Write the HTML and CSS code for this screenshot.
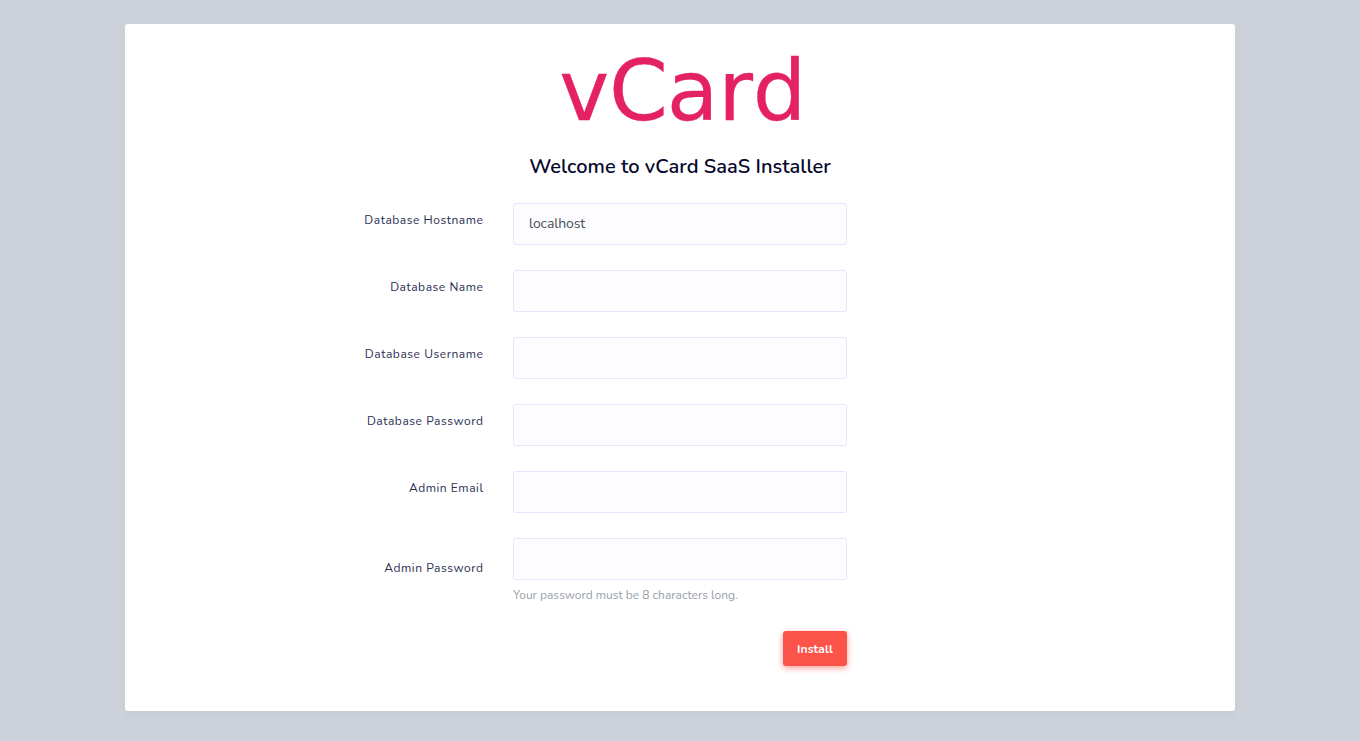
FILE: index.html
```html
<!DOCTYPE html>
<html lang="en">
<head>
<meta charset="utf-8">
<title>vCard SaaS Installer</title>
<link rel="stylesheet" href="styles.css">
</head>
<body>
<main class="card">
  <svg class="logo" viewBox="0 0 250 80" role="img" aria-label="vCard"><text class="logo-text" x="4.2 54 111.8 163.2 197.7" y="72.2">vCard</text></svg>
  <h1 class="title"><span>Welcome to vCard SaaS Installer</span></h1>
  <form class="form">
    <div class="row"><label class="label" for="host">Database Hostname</label><input class="input" id="host" type="text" value="localhost"></div>
    <div class="row"><label class="label" for="name">Database Name</label><input class="input" id="name" type="text"></div>
    <div class="row"><label class="label" for="user">Database Username</label><input class="input" id="user" type="text"></div>
    <div class="row"><label class="label" for="pass">Database Password</label><input class="input" id="pass" type="password"></div>
    <div class="row"><label class="label" for="email">Admin Email</label><input class="input" id="email" type="email"></div>
    <div class="row row-last"><label class="label" for="adminpass">Admin Password</label><div class="field"><input class="input" id="adminpass" type="password"><small class="hint">Your password must be 8 characters long.</small></div></div>
    <div class="actions"><button class="button" type="button">Install</button></div>
  </form>
</main>
</body>
</html>
```
FILE: styles.css
```css
* { box-sizing: border-box; }
body {
  margin: 0;
  min-height: 741px;
  padding: 24px 0 30px;
  background: #cdd1d9;
  font-family: Nunito, Lato, sans-serif;
}
.card {
  width: 1110px;
  height: 687px;
  margin: 0 auto;
  padding-top: 24px;
  border-radius: 3px;
  background: #fff;
  box-shadow: 0 4px 8px rgba(0, 0, 0, .03);
}
.logo {
  display: block;
  width: 250px;
  height: 80px;
  margin: 0 auto;
  overflow: visible;
}
.logo-text {
  font-family: "DejaVu Sans", sans-serif;
  font-size: 84.5px;
  fill: #e52165;
  stroke: #e52165;
  stroke-width: .3px;
}
.title {
  margin: 24px 0 21px;
  color: #06072d;
  font-size: 20px;
  line-height: 30px;
  font-weight: 600;
  letter-spacing: .03px;
  text-align: center;
}
.form {
  width: 722px;
}
.row {
  display: grid;
  grid-template-columns: 358.5px 334px;
  column-gap: 29.5px;
  align-items: start;
  height: 42px;
  margin-bottom: 25px;
}
.label {
  padding-top: 7px;
  color: #292e52;
  font-size: 12px;
  line-height: 20px;
  letter-spacing: .54px;
  text-align: right;
}
.input {
  display: block;
  width: 334px;
  height: 42px;
  padding: 9px 15px 11px;
  border: 1px solid #e4e6fc;
  border-radius: 3px;
  background: #fdfdff;
  color: #495057;
  font: 14px/20px Nunito, Lato, sans-serif;
  letter-spacing: -.12px;
}
.row-last { height: 68px; }
.row-last .label { padding-top: 20px; }
.hint {
  display: block;
  margin-top: 5px;
  color: #98a0a8;
  font-size: 12px;
  line-height: 20px;
}
.actions {
  display: flex;
  justify-content: flex-end;
}
.button {
  width: 64px;
  height: 35px;
  padding: 0;
  border: 0;
  border-radius: 3px;
  background: #fc544b;
  box-shadow: 0 2px 6px #fd9b96;
  color: #fff;
  font: 700 12px/24px Nunito, Lato, sans-serif;
  letter-spacing: .15px;
}
```
